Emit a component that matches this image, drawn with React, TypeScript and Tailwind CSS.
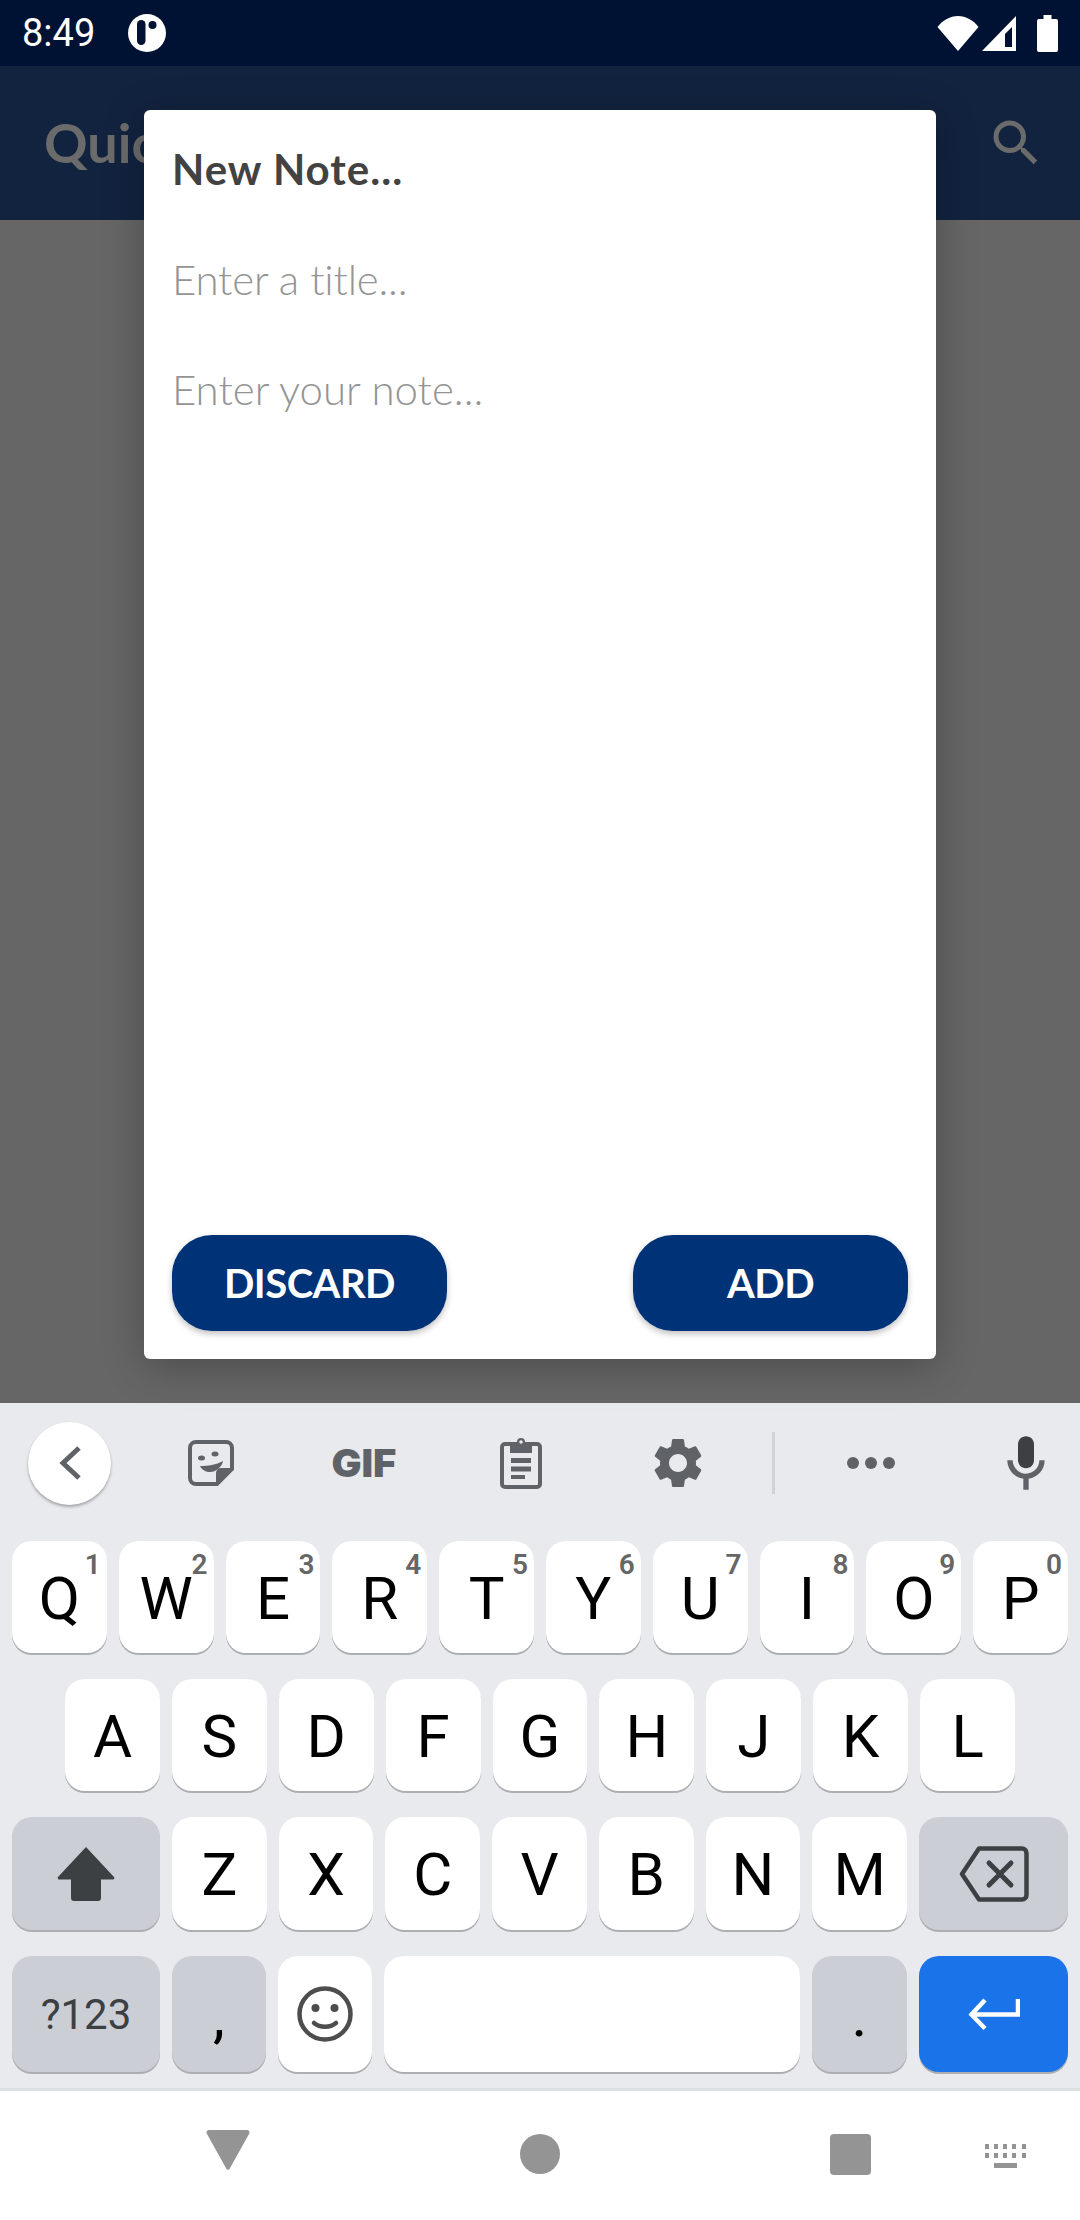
const DIALOG_FONT = "font-['Lato',sans-serif]";

function Key({ label, sup, dark, className = "flex-1" }: { label: string; sup?: string; dark?: boolean; className?: string }) {
  return (
    <div
      className={`relative ${className} flex items-center justify-center pt-[3px] rounded-[20px] shadow-[0_2px_0_#acaeb2] text-[60px] leading-none text-black ${
        dark ? "bg-[#ccced5]" : "bg-white"
      }`}
    >
      {label}
      {sup && (
        <span className="absolute top-[10px] right-[6px] text-[28px] font-semibold leading-[28px] text-[#666]">{sup}</span>
      )}
    </div>
  );
}

function StatusBar() {
  return (
    <div className="h-[66px] bg-[#001233] flex items-center pl-[22px] pr-[22px] text-white">
      <span className="w-[72px] text-[38px] leading-none">8:49</span>
      <svg className="ml-[33px]" width="40" height="40" viewBox="0 0 40 40">
        <circle cx="20" cy="20" r="19" fill="#fff" />
        <rect x="10" y="7" width="8.500" height="25" rx="4.200" fill="#001233" />
        <circle cx="25.500" cy="12" r="4" fill="#001233" />
      </svg>
      <div className="flex-1" />
      <svg width="42" height="35" viewBox="0 0 42 35">
        <path d="M21 35 L0.500 11 C6 4 13 0 21 0 C29 0 36 4 41.500 11 Z" fill="#fff" />
      </svg>
      <svg className="ml-[3px]" width="35" height="35" viewBox="0 0 35 35">
        <path d="M34 0V35H0Z" fill="#fff" />
        <path d="M23 18 30 11V31H23Z" fill="#001233" />
      </svg>
      <svg className="ml-[20px]" width="21" height="37" viewBox="0 0 21 37">
        <path d="M6.500 0h8v4h4.500a2 2 0 0 1 2 2v29a2 2 0 0 1-2 2H2a2 2 0 0 1-2-2V6a2 2 0 0 1 2-2h4.500z" fill="#fff" />
      </svg>
    </div>
  );
}

function AppBar() {
  return (
    <div className="h-[154px] bg-[#12233f] flex items-center pl-[44px] pr-[34px] text-[#6b6b6b]">
      <span className={`${DIALOG_FONT} text-[54px] font-bold leading-none`}>Quick</span>
      <div className="flex-1" />
      <svg width="60" height="60" viewBox="0 0 24 24" fill="currentColor">
        <path d="M15.500 14h-.79l-.28-.27A6.471 6.471 0 0 0 16 9.500 6.500 6.500 0 1 0 9.500 16c1.610 0 3.090-.59 4.230-1.570l.27.28v.79l5 4.990L20.490 19l-4.990-5zm-6 0C7.010 14 5 11.990 5 9.500S7.010 5 9.500 5 14 7.010 14 9.500 11.990 14 9.500 14z" />
      </svg>
    </div>
  );
}

function NoteDialog() {
  return (
    <div className={`${DIALOG_FONT} absolute left-[144px] top-[110px] w-[792px] h-[1249px] bg-white rounded-[6px] shadow-[0_8px_40px_rgba(0,0,0,0.25)] flex flex-col px-[28px]`}>
      <div className="mt-[30px] text-[42px] leading-[58px] font-bold tracking-[1px] text-[#424242]">New Note...</div>
      <div className="mt-[52px] text-[42px] leading-[58px] font-light tracking-[-0.2px] text-[#949494]">Enter a title...</div>
      <div className="mt-[52px] text-[42px] leading-[58px] font-light text-[#949494]">Enter your note...</div>
      <div className="mt-auto mb-[28px] flex justify-between">
        <button className="w-[275px] h-[96px] rounded-[40px] bg-[#003278] text-white text-[40px] font-bold tracking-[-0.5px] shadow-[0_3px_6px_rgba(0,0,0,0.25)]">DISCARD</button>
        <button className="w-[275px] h-[96px] rounded-[40px] bg-[#003278] text-white text-[40px] font-bold tracking-[-0.5px] shadow-[0_3px_6px_rgba(0,0,0,0.25)]">ADD</button>
      </div>
    </div>
  );
}

function Toolbar() {
  return (
    <div className="h-[138px] pb-[18px] flex items-center text-[#5f6368]">
      <div className="ml-[28px] w-[83px] h-[83px] rounded-full bg-white shadow-[0_2px_3px_rgba(0,0,0,0.3)] flex items-center justify-center">
        <svg width="24" height="36" viewBox="0 0 24 36" fill="none" stroke="#5f6368" strokeWidth="5">
          <path d="M21 3 5 18l16 15" />
        </svg>
      </div>
      <svg className="ml-[77px]" width="46" height="46" viewBox="0 0 46 46" fill="none">
        <path d="M8 2h30a6 6 0 0 1 6 6v21L29 44H8a6 6 0 0 1-6-6V8a6 6 0 0 1 6-6z" stroke="#5f6368" strokeWidth="4" />
        <path d="M43 28H33a5 5 0 0 0-5 5v10z" fill="#5f6368" />
        <ellipse cx="13.500" cy="18" rx="3.500" ry="2.500" fill="#5f6368" />
        <ellipse cx="27" cy="14" rx="3.500" ry="2.500" fill="#5f6368" />
        <path d="M12 26c8 0 16-1 23-5-1 6-7 11-13 11-4 0-8-2-10-6z" fill="#5f6368" />
      </svg>
      <span className="ml-[99px] w-[64px] font-['Inter',sans-serif] font-black text-[38px] leading-none scale-x-[1.05]">GIF</span>
      <svg className="ml-[103px]" width="42" height="52" viewBox="0 0 42 52" fill="none">
        <rect x="2" y="7" width="38" height="43" rx="3" stroke="#5f6368" strokeWidth="4" />
        <path d="M10 5h7a4 4 0 0 1 8 0h7v11H10z" fill="#5f6368" />
        <circle cx="21" cy="5" r="1.800" fill="#e8eaed" />
        <path d="M11 21h20v5H11zM11 29.500h20v5H11zM11 38h14v4H11z" fill="#5f6368" />
      </svg>
      <svg className="ml-[106px]" width="60" height="60" viewBox="0 0 24 24" fill="#5f6368">
        <path d="M19.140 12.940c.04-.3.06-.61.06-.94 0-.32-.02-.64-.07-.94l2.030-1.580a.49.49 0 0 0 .12-.61l-1.920-3.320a.488.488 0 0 0-.59-.22l-2.390.96c-.5-.38-1.030-.7-1.620-.94l-.36-2.540a.484.484 0 0 0-.48-.41h-3.840c-.24 0-.43.17-.47.41l-.36 2.540c-.59.24-1.130.57-1.620.94l-2.390-.96c-.22-.08-.47 0-.59.22L2.740 8.870c-.12.21-.08.47.12.61l2.030 1.580c-.05.3-.09.63-.09.94s.02.64.07.94l-2.030 1.580a.49.49 0 0 0-.12.61l1.920 3.320c.12.22.37.29.59.22l2.390-.96c.5.38 1.030.7 1.620.94l.36 2.540c.05.24.24.41.48.41h3.840c.24 0 .44-.17.47-.41l.36-2.540c.59-.24 1.130-.56 1.620-.94l2.390.96c.22.08.47 0 .59-.22l1.920-3.320c.12-.22.07-.47-.12-.61l-2.010-1.580zM12 15.600c-1.980 0-3.600-1.620-3.600-3.600s1.620-3.600 3.600-3.600 3.600 1.620 3.600 3.600-1.620 3.600-3.600 3.600z" />
      </svg>
      <div className="ml-[64px] w-[3px] h-[62px] bg-[#d0d2d6]" />
      <div className="ml-[72px] flex gap-[6px]">
        <div className="w-[12px] h-[12px] rounded-full bg-[#5f6368]" />
        <div className="w-[12px] h-[12px] rounded-full bg-[#5f6368]" />
        <div className="w-[12px] h-[12px] rounded-full bg-[#5f6368]" />
      </div>
      <svg className="ml-[99px]" width="64" height="64" viewBox="0 0 24 24">
        <path d="M12 14c1.660 0 3-1.340 3-3V5c0-1.660-1.340-3-3-3S9 3.340 9 5v6c0 1.660 1.340 3 3 3z" fill="#3c4043" />
        <path d="M17 11c0 2.760-2.240 5-5 5s-5-2.240-5-5H5c0 3.530 2.610 6.430 6 6.920V22h2v-4.080c3.390-.49 6-3.390 6-6.920h-2z" fill="#5f6368" />
      </svg>
    </div>
  );
}

function Keyboard() {
  return (
    <div className="h-[688px] bg-[#e8eaed] border-b-[3px] border-[#dedfe2] font-['Roboto',sans-serif]">
      <Toolbar />
      <div className="flex flex-col gap-[26px] px-[12px]">
        <div className="h-[112px] flex gap-[12px]">
          {["Q1", "W2", "E3", "R4", "T5", "Y6", "U7", "I8", "O9", "P0"].map((k) => (
            <Key key={k} label={k[0]} sup={k[1]} />
          ))}
        </div>
        <div className="h-[112px] flex gap-[12px] px-[53px]">
          {["A", "S", "D", "F", "G", "H", "J", "K", "L"].map((k) => (
            <Key key={k} label={k} />
          ))}
        </div>
        <div className="h-[113px] flex gap-[12px]">
          <div className="w-[148px] flex items-center justify-center rounded-[20px] bg-[#ccced5] shadow-[0_2px_0_#acaeb2]">
            <svg width="58" height="54" viewBox="0 0 58 54">
              <path d="M29 0 57 30a1.500 1.500 0 0 1-1 2.500H44V51a3 3 0 0 1-3 3H17a3 3 0 0 1-3-3V32.500H2A1.500 1.500 0 0 1 1 30z" fill="#3c4043" />
            </svg>
          </div>
          {["Z", "X", "C", "V", "B", "N", "M"].map((k) => (
            <Key key={k} label={k} />
          ))}
          <div className="w-[149px] flex items-center justify-center rounded-[20px] bg-[#ccced5] shadow-[0_2px_0_#acaeb2]">
            <svg width="70" height="56" viewBox="0 0 70 56" fill="none" stroke="#3c4043" strokeWidth="4.500">
              <path d="M20 2.500h43a4.500 4.500 0 0 1 4.500 4.500v42a4.500 4.500 0 0 1-4.500 4.500H20L3 28z" strokeLinejoin="round" />
              <path d="M30 17l22 22M52 17 30 39" strokeLinecap="round" strokeWidth="5" />
            </svg>
          </div>
        </div>
        <div className="h-[116px] flex gap-[12px]">
          <div className="w-[148px] flex items-center justify-center rounded-[20px] bg-[#ccced5] shadow-[0_2px_0_#acaeb2] text-[42px] text-[#3c4043]">?123</div>
          <Key label="," dark className="w-[94px]" />
          <div className="w-[94px] flex items-center justify-center rounded-[20px] bg-white shadow-[0_2px_0_#acaeb2]">
            <svg width="56" height="56" viewBox="0 0 56 56" fill="none" stroke="#4d4d4d" strokeWidth="4.500">
              <circle cx="28" cy="28" r="25.500" />
              <circle cx="18.500" cy="22" r="4" fill="#4d4d4d" stroke="none" />
              <circle cx="37.500" cy="22" r="4" fill="#4d4d4d" stroke="none" />
              <path d="M17 37c6 5 16 5 22 0" strokeLinecap="round" />
            </svg>
          </div>
          <div className="flex-1 rounded-[20px] bg-white shadow-[0_2px_0_#acaeb2]" />
          <Key label="." dark className="w-[95px]" />
          <div className="w-[149px] flex items-center justify-center rounded-[20px] bg-[#1a73e8] shadow-[0_2px_0_#acaeb2]">
            <svg width="52" height="34" viewBox="0 0 52 34" fill="none" stroke="#fff" strokeWidth="4.500">
              <path d="M50 2v15.500H5M17 3 3.500 17.500 17 31.500" />
            </svg>
          </div>
        </div>
      </div>
    </div>
  );
}

function NavBar() {
  return (
    <div className="h-[129px] bg-white flex items-center">
      <svg className="ml-[206px] -mt-[12px]" width="44" height="40" viewBox="0 0 44 40">
        <path d="M3 0h38a2.500 2.500 0 0 1 2.300 3.500L23.500 39a1.800 1.800 0 0 1-3 0L.7 3.500A2.500 2.500 0 0 1 3 0z" fill="#949494" />
      </svg>
      <div className="ml-[270px] -mt-[3px] w-[40px] h-[40px] rounded-full bg-[#949494]" />
      <div className="ml-[270px] -mt-[2px] w-[41px] h-[41px] rounded-[4px] bg-[#949494]" />
      <svg className="ml-[114px]" width="43" height="24" viewBox="0 0 43 24" fill="#949494">
        <path d="M0 0h4v5H0zM9 0h4v5H9zM18 0h4v5h-4zM27 0h4v5h-4zM37 0h4v5h-4zM0 9h4v5H0zM9 9h4v5H9zM18 9h4v5h-4zM27 9h4v5h-4zM37 9h4v5h-4zM9 19h23v5H9z" />
      </svg>
    </div>
  );
}

export default function App() {
  return (
    <div className="relative w-[1080px] h-[2220px] flex flex-col bg-[#666] font-['Roboto',sans-serif] overflow-hidden">
      <StatusBar />
      <AppBar />
      {/* dimmed note list behind the dialog */}
      <div className="h-[1183px] bg-[#666]" />
      <Keyboard />
      <NavBar />
      <NoteDialog />
    </div>
  );
}
